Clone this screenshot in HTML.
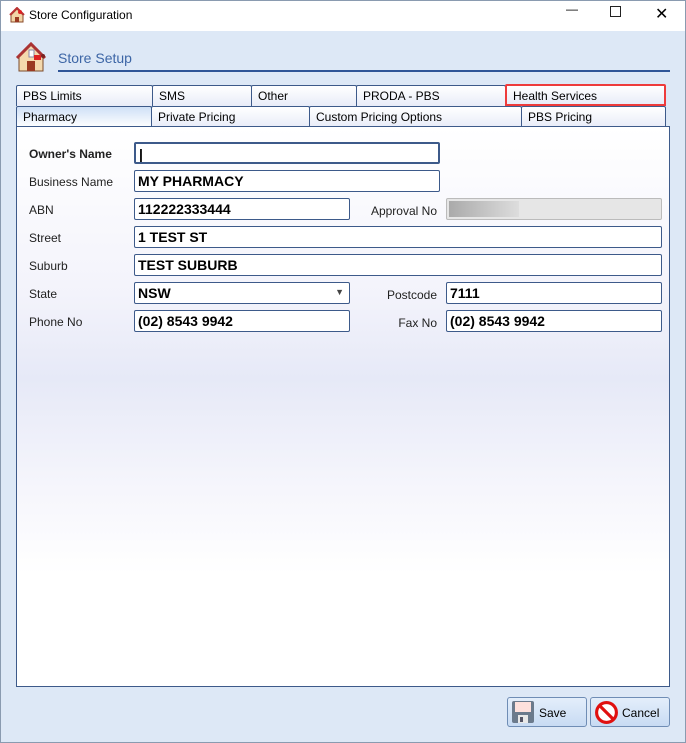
<!DOCTYPE html>
<html><head><style>
*{box-sizing:border-box;margin:0;padding:0}
body{width:686px;height:743px;font-family:"Liberation Sans",sans-serif;background:#fff;position:relative;overflow:hidden}
.win{position:absolute;left:0;top:0;width:686px;height:743px;background:#dde8f6}
.frame{position:absolute;left:0;top:0;width:686px;height:743px;border:1px solid #8a9bb0;pointer-events:none}
.title{position:absolute;left:0;top:0;width:686px;height:31px;background:#fff}
.title span{position:absolute;left:29px;top:8px;font-size:12px;color:#000}
.ctl{position:absolute;top:6px;font-size:14px;color:#222}
.hdr{position:absolute;left:58px;top:50px;font-size:14px;color:#3d66a6}
.hline{position:absolute;left:58px;top:70px;width:612px;height:2px;background:#2f5597}
.tab{position:absolute;height:21px;border:1px solid #3d5a8a;border-bottom:none;border-radius:2px 2px 0 0;background:linear-gradient(#fff,#e8ecf8);font-size:12px;padding:3px 0 0 6px;color:#000}
.sel{background:linear-gradient(#cfe0f7,#fff)}
.panel{position:absolute;left:16px;top:126px;width:654px;height:561px;border:1px solid #3d5a8a;background:linear-gradient(#fff 0%,#f3f3fb 30%,#e6e9f7 45%,#f6f6fc 65%,#fff 80%)}
.lbl{position:absolute;left:29px;font-size:12px;color:#222}
.inp{position:absolute;height:22px;border:1px solid #3d5a8a;border-radius:2px;background:#fff;font-size:14px;font-weight:bold;padding:2px 0 0 3px}
.rl{position:absolute;font-size:12px;color:#222;text-align:right;width:100px}
.btn{position:absolute;top:697px;height:30px;border:1px solid #6f8db5;border-radius:3px;background:linear-gradient(#e4eefb,#c8dbf3);font-size:12px}
</style></head><body>
<div class="win">
<div class="title">
<svg style="position:absolute;left:9px;top:7px" width="16" height="16" viewBox="0 0 16 16"><path d="M2 8L8 2L14 8V15H2Z" fill="#f2d4a6" stroke="#8a4a2a"/><path d="M1 8L8 1L15 8" fill="none" stroke="#b33" stroke-width="2"/><rect x="6" y="10" width="4" height="5" fill="#9b3a22"/><circle cx="11" cy="5" r="2" fill="#d22"/></svg>
<span>Store Configuration</span>
<span class="ctl" style="left:566px;top:2px">&#8212;</span>
<span class="ctl" style="left:610px;top:6px;width:11px;height:11px;border:1.5px solid #222"></span>
<span class="ctl" style="left:655px;top:4px;font-size:16px">&#10005;</span>
</div>
<svg style="position:absolute;left:15px;top:41px" width="32" height="32" viewBox="0 0 32 32"><path d="M4 16L16 4L28 16V30H4Z" fill="#f4d9ad" stroke="#7a4a2a"/><path d="M2 17L16 3L30 17" fill="none" stroke="#a33" stroke-width="3"/><rect x="12" y="20" width="8" height="10" fill="#9b3a22"/><rect x="14" y="9" width="5" height="7" fill="#fff" stroke="#88a"/><rect x="19" y="14" width="7" height="5" fill="#d22"/><circle cx="28" cy="15" r="2" fill="#7a2222"/></svg>
<div class="hdr">Store Setup</div>
<div class="hline"></div>
<div class="tab" style="left:16px;top:85px;width:137px">PBS Limits</div>
<div class="tab" style="left:152px;top:85px;width:100px">SMS</div>
<div class="tab" style="left:251px;top:85px;width:106px">Other</div>
<div class="tab" style="left:356px;top:85px;width:150px">PRODA - PBS</div>
<div class="tab" style="left:505px;top:84px;width:161px;height:22px;border:2px solid #ee3b3b">Health Services</div>
<div class="tab sel" style="left:16px;top:106px;width:136px">Pharmacy</div>
<div class="tab" style="left:151px;top:106px;width:159px">Private Pricing</div>
<div class="tab" style="left:309px;top:106px;width:213px">Custom Pricing Options</div>
<div class="tab" style="left:521px;top:106px;width:145px">PBS Pricing</div>
<div class="panel"></div>
<div class="lbl" style="top:147px;font-weight:bold">Owner's Name</div>
<div class="lbl" style="top:175px">Business Name</div>
<div class="lbl" style="top:203px">ABN</div>
<div class="lbl" style="top:231px">Street</div>
<div class="lbl" style="top:259px">Suburb</div>
<div class="lbl" style="top:287px">State</div>
<div class="lbl" style="top:315px">Phone No</div>
<div class="inp" style="left:134px;top:142px;width:306px;border-width:2px">|</div>
<div class="inp" style="left:134px;top:170px;width:306px">MY PHARMACY</div>
<div class="inp" style="left:134px;top:198px;width:216px">112222333444</div>
<div class="inp" style="left:134px;top:226px;width:528px">1 TEST ST</div>
<div class="inp" style="left:134px;top:254px;width:528px">TEST SUBURB</div>
<div class="inp" style="left:134px;top:282px;width:216px">NSW<span style="position:absolute;right:5px;top:4px;font-size:9px;color:#444">&#9660;</span></div>
<div class="inp" style="left:134px;top:310px;width:216px">(02) 8543 9942</div>
<div class="rl" style="left:337px;top:204px">Approval No</div>
<div class="rl" style="left:337px;top:288px">Postcode</div>
<div class="rl" style="left:337px;top:316px">Fax No</div>
<div class="inp" style="left:446px;top:198px;width:216px;background:#e6e6e6;border-color:#bbb"><div style="position:absolute;left:2px;top:2px;width:70px;height:16px;background:linear-gradient(90deg,#aaa,#ddd)"></div></div>
<div class="inp" style="left:446px;top:282px;width:216px">7111</div>
<div class="inp" style="left:446px;top:310px;width:216px">(02) 8543 9942</div>
<div class="btn" style="left:507px;width:80px">
<svg style="position:absolute;left:3px;top:2px" width="24" height="24" viewBox="0 0 24 24"><rect x="1" y="1" width="22" height="22" rx="2" fill="#6b7a8c"/><rect x="4" y="2" width="16" height="10" fill="#fde0dc"/><rect x="7" y="15" width="10" height="8" fill="#e8e8e8"/><rect x="9" y="17" width="3" height="5" fill="#556"/></svg>
<span style="position:absolute;left:31px;top:8px">Save</span></div>
<div class="btn" style="left:590px;width:80px">
<svg style="position:absolute;left:3px;top:2px" width="25" height="25" viewBox="0 0 24 24"><circle cx="12" cy="12" r="9.5" fill="#fff" stroke="#e01010" stroke-width="3"/><path d="M5.5 5.5L18.5 18.5" stroke="#e01010" stroke-width="3"/></svg>
<span style="position:absolute;left:31px;top:8px">Cancel</span></div>
</div>
<div class="frame"></div>
</body></html>
